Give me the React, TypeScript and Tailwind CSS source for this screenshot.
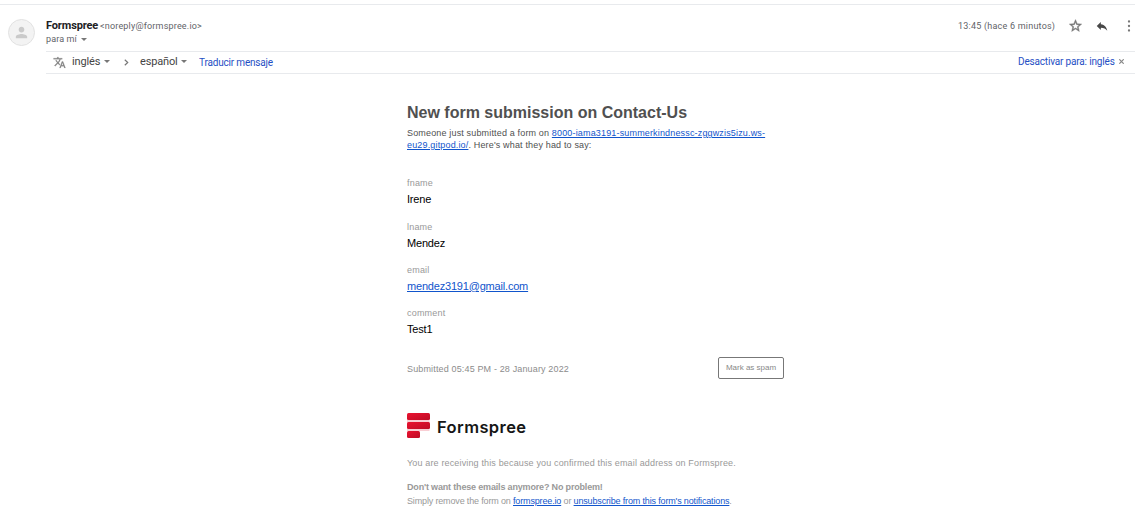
import React from "react";

const fields = [
  { label: "fname", value: "Irene", height: "h-[44px]" },
  { label: "lname", value: "Mendez", height: "h-[43px]" },
  { label: "email", value: "mendez3191@gmail.com", height: "h-[43px]", link: true },
  { label: "comment", value: "Test1", height: "h-[43px]" },
];

function Caret() {
  return (
    <svg className="h-[3px] w-[6px] shrink-0" viewBox="0 0 6 3">
      <path d="M0 0h6L3 3z" fill="#777" />
    </svg>
  );
}

function Header() {
  return (
    <header className="flex h-[46px] w-[1135px] border-t border-[#e8eaed]">
      <div className="ml-2 mt-[14px] flex h-[27px] w-[27px] shrink-0 items-center justify-center rounded-full border border-[#e2e2e2] bg-[#f3f3f3]">
        <svg className="h-[17px] w-[17px]" viewBox="0 0 24 24" fill="#cacaca">
          <path d="M12 12c2.210 0 4-1.790 4-4s-1.790-4-4-4-4 1.790-4 4 1.790 4 4 4zm0 2c-2.670 0-8 1.340-8 4v2h16v-2c0-2.660-5.330-4-8-4z" />
        </svg>
      </div>
      <div className="ml-[11px] mt-[13px]">
        <div className="flex h-[15px] items-baseline leading-[15px]">
          <span className="w-[54px] text-[11px] font-bold tracking-[-0.14px] text-[#202124]">Formspree</span>
          <span className="text-[9px] tracking-[0.19px] text-[#5f6368]">&lt;noreply@formspree.io&gt;</span>
        </div>
        <div className="flex h-[12px] items-center text-[9px] leading-[12px] tracking-[0.13px] text-[#5f6368]">
          <span className="w-[35px]">para mí</span>
          <Caret />
        </div>
      </div>
      <div className="ml-auto mt-[13px] flex h-[16px] items-center">
        <span className="w-[111px] text-[9px] leading-[14px] tracking-[0.22px] text-[#5f6368]">13:45 (hace 6 minutos)</span>
        <svg className="-mt-px h-[13px] w-[13px]" viewBox="1.500 1 21 21" fill="#777" stroke="#777" strokeWidth="0.7">
          <path d="M22 9.240l-7.190-.620L12 2 9.190 8.630 2 9.240l5.460 4.730L5.820 21 12 17.270 18.180 21l-1.630-7.030L22 9.240zM12 15.400l-3.760 2.270 1-4.280-3.320-2.880 4.380-.380L12 6.100l1.710 4.040 4.380.380-3.320 2.880 1 4.280L12 15.400z" />
        </svg>
        <svg className="-mt-px ml-[13px] h-[14px] w-[14px]" viewBox="0 0 24 24" fill="#484848">
          <path d="M10 9V5l-7 7 7 7v-4.100c5 0 8.500 1.600 11 5.100-1-5-4-10-11-11z" />
        </svg>
        <svg className="ml-[13px] mr-[-1px] h-[14px] w-[14px]" viewBox="0 0 14 14" fill="#777">
          <circle cx="7" cy="2.500" r="1.150" />
          <circle cx="7" cy="7" r="1.150" />
          <circle cx="7" cy="11.500" r="1.150" />
        </svg>
      </div>
    </header>
  );
}

function TranslateBar() {
  return (
    <div className="ml-[46px] mt-px flex h-[23px] w-[1089px] items-start border-y border-[#e8eaed] text-[#444]">
      <svg className="ml-[7px] mt-[4px] h-[13px] w-[13px]" viewBox="0 0 24 24" fill="#808080" stroke="#808080" strokeWidth="0.4">
        <path d="M12.870 15.070l-2.540-2.510.030-.030A17.520 17.520 0 0 0 14.070 6H17V4h-7V2H8v2H1v1.990h11.170C11.500 7.920 10.440 9.750 9 11.350 8.070 10.320 7.300 9.190 6.690 8h-2c.730 1.630 1.730 3.170 2.980 4.560l-5.090 5.020L4 19l5-5 3.110 3.110.760-2.040zM18.500 10h-2L12 22h2l1.120-3h4.750L21 22h2l-4.500-12zm-2.620 7l1.620-4.330L19.120 17h-3.240z" />
      </svg>
      <div className="ml-[6px] mt-[2px] flex h-[15px] items-center text-[11px] leading-[15px] tracking-[-0.15px]">
        <span className="w-[32px]">inglés</span>
        <Caret />
        <svg className="ml-[14px] mt-px h-[7px] w-[5px]" viewBox="0 0 5 7" fill="none" stroke="#777" strokeWidth="1.2">
          <path d="M.8.8 3.700 3.500.8 6.200" />
        </svg>
        <span className="ml-[11px] w-[41px]">español</span>
        <Caret />
      </div>
      <span className="ml-[12px] mt-[4px] whitespace-nowrap text-[10px] leading-[14px] tracking-[-0.18px] text-[#1f4fc4]">Traducir mensaje</span>
      <div className="ml-auto mr-[11px] mt-[2px] flex h-[15px] items-center">
        <span className="w-[101px] whitespace-nowrap text-[10px] leading-[15px] tracking-[-0.17px] text-[#1f4fc4]">Desactivar para: inglés</span>
        <svg className="h-[5px] w-[5px]" viewBox="0 0 5 5" stroke="#888" strokeWidth="1.2">
          <path d="M.3.3l4.400 4.400M4.700.3.3 4.700" />
        </svg>
      </div>
    </div>
  );
}

function Logo() {
  return (
    <div className="flex h-[26px] items-center">
      <svg className="h-[26px] w-[23px]" viewBox="0 0 23 26">
        <defs>
          <linearGradient id="brand" x1="0" y1="0" x2="1" y2="1">
            <stop offset="0" stopColor="#ea1230" />
            <stop offset="1" stopColor="#be0c25" />
          </linearGradient>
        </defs>
        <rect y="5" width="22.500" height="6" fill="#f9ced4" />
        <rect y="14" width="22.500" height="4" fill="#f9ced4" />
        <rect width="23" height="7" rx="1.500" fill="url(#brand)" />
        <rect y="9" width="23" height="7" rx="1.500" fill="url(#brand)" />
        <rect y="18" width="13" height="7" rx="1.500" fill="url(#brand)" />
      </svg>
      <span className="ml-[7px] mt-[2px] font-[Inter,sans-serif] text-[16.5px] font-semibold leading-[24px] tracking-[0.4px] text-[#161616]">Formspree</span>
    </div>
  );
}

export default function App() {
  return (
    <div className="h-[530px] w-[1145px] overflow-hidden bg-white pt-[4px] font-[Roboto,sans-serif]">
      <Header />
      <TranslateBar />
      <main className="ml-[407px] w-[377px] pt-[29px] font-['Liberation_Sans',sans-serif] text-[9px]">
        <h1 className="h-[24px] whitespace-nowrap text-[16px] font-bold leading-[20px] text-[#505050]">New form submission on Contact-Us</h1>
        <p className="h-[50px] whitespace-nowrap leading-[12px] tracking-[0.16px] text-[#505050]">
          Someone just submitted a form on <a className="text-[#15c] underline">8000-iama3191-summerkindnessc-zggwzis5izu.ws-</a>
          <br />
          <a className="text-[#15c] underline">eu29.gitpod.io/</a>. Here's what they had to say:
        </p>
        {fields.map((f) => (
          <div key={f.label} className={f.height}>
            <div className="h-[14px] leading-[12px] tracking-[0.2px] text-[#999]">{f.label}</div>
            <div className={`text-[11px] leading-[16px] tracking-[-0.19px] ${f.link ? "text-[#15c] underline" : "text-black"}`}>{f.value}</div>
          </div>
        ))}
        <div className="mt-[7px] flex h-[22px] items-center justify-between">
          <span className="mt-[3px] tracking-[0.15px] text-[#8c8c8c]">Submitted 05:45 PM - 28 January 2022</span>
          <button className="h-[22px] w-[66px] rounded-[2px] border border-[#777] text-[8px] leading-[18px] text-[#888]">Mark as spam</button>
        </div>
        <div className="mt-[34px]">
          <Logo />
        </div>
        <footer className="mt-[18px] whitespace-nowrap text-[#999]">
          <p className="h-[24px] leading-[12px] tracking-[0.15px]">You are receiving this because you confirmed this email address on Formspree.</p>
          <p className="h-[14px] font-bold leading-[12px] tracking-[-0.17px]">Don't want these emails anymore? No problem!</p>
          <p className="leading-[12px] tracking-[-0.155px]">
            Simply remove the form on <a className="text-[#15c] underline">formspree.io</a> or <a className="text-[#15c] underline">unsubscribe from this form's notifications</a>.
          </p>
        </footer>
      </main>
    </div>
  );
}
